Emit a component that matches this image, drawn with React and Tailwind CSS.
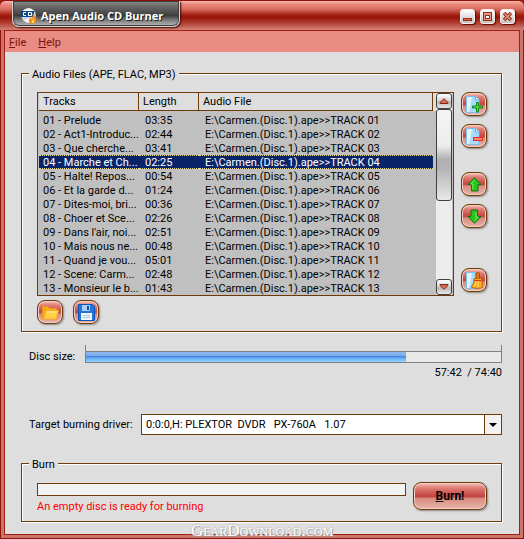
import { useState } from 'react';

const tracks = [
  { name: '01 - Prelude', length: '03:35' },
  { name: '02 - Act1-Introduc...', length: '02:44' },
  { name: '03 - Que cherche...', length: '03:41' },
  { name: '04 - Marche et Ch...', length: '02:25' },
  { name: '05 - Halte! Repos...', length: '00:54' },
  { name: '06 - Et la garde d...', length: '01:24' },
  { name: '07 - Dites-moi, bri...', length: '00:36' },
  { name: '08 - Choer et Sce...', length: '02:26' },
  { name: "09 - Dans l'air, noi...", length: '02:51' },
  { name: '10 - Mais nous ne...', length: '00:48' },
  { name: '11 - Quand je vou...', length: '05:01' },
  { name: '12 - Scene: Carm...', length: '02:48' },
  { name: '13 - Monsieur le b...', length: '01:43' },
];

const DRIVER = '0:0:0,H: PLEXTOR\u00a0 DVDR\u00a0\u00a0 PX-760A\u00a0\u00a0 1.07';

// glossy red surface shared by all push buttons
const GLOSS =
  'border border-[#6e3a08] bg-[linear-gradient(#f6c4bc_0%,#e08078_18%,#c84c48_46%,#c04844_52%,#d88c80_60%,#e8b4a8_100%)] shadow-[1px_1px_2px_#8a8a8a,inset_0_0_0_1px_#f2d0c8]';

function AppIcon() {
  return (
    <svg width="16" height="16" viewBox="0 0 16 16" aria-hidden="true" className="shrink-0">
      <circle cx="7.5" cy="7.5" r="7.3" fill="#cfd6dc" />
      <path d="M2 3a7 7 0 0 1 10-1L8 7z" fill="#fff" />
      <path d="M3 12a7 7 0 0 0 6 3l-1-5z" fill="#f4f6f8" />
      <rect y="3" width="13" height="6" fill="#0a4a88" />
      <path d="M5 4.500H2.500v3H5M7.500 4v4M7 4.500h3.500v3H7" fill="none" stroke="#fff" />
      <path d="M8.500 15.500c-1.500-3 .5-4 .5-6 1 .5 1.500 1.500 1.500 2.500C12 10 12 7 11.500 5 14 7 14 9 14 10.500l1-1.500c1 3 0 5.500-2 6.500z" fill="#f58a12" />
      <path d="M10.500 15c0-2 1.500-2 1.500-4.500 1.500 1.500 1.500 3.500.5 4.500z" fill="#ffe04a" />
    </svg>
  );
}

function Sheet() {
  return (
    <>
      <path d="M.5.5h9.500l3 3v13H.5z" fill="#a8dcfa" stroke="#7cc0ec" />
      <path d="M1 1h5L3 16H1z" fill="#e0f6ff" />
      <path d="M9.500 1v3h3" fill="#fff" stroke="#5ca8e0" />
    </>
  );
}

function AddIcon() {
  return (
    <svg width="17" height="17" viewBox="0 0 17 17" className="shrink-0">
      <Sheet />
      <path d="M10.500 6.500h2v3.500h4v2h-4v4h-2v-4h-4v-2h4z" fill="#5ed83c" stroke="#128414" />
    </svg>
  );
}

function RemoveIcon() {
  return (
    <svg width="17" height="17" viewBox="0 0 17 17" className="shrink-0">
      <Sheet />
      <rect x="7.500" y="9.500" width="9" height="3" fill="#ff8878" stroke="#e8281c" />
    </svg>
  );
}

function ArrowIcon({ down }) {
  return (
    <svg width="15" height="15" viewBox="0 0 15 15" className={down ? 'shrink-0 rotate-180' : 'shrink-0'}>
      <path d="M7.500 .7L14 7.500h-3v6.500H4.500V7.500H1z" fill="#2cc41c" stroke="#0c7410" />
      <path d="M7.500 3L4 7h2v5" fill="none" stroke="#7cea60" />
    </svg>
  );
}

function CleanIcon() {
  return (
    <svg width="17" height="17" viewBox="0 0 17 17" className="shrink-0">
      <Sheet />
      <path d="M10 2c0-2 3.500-2 3.500 0v4.500H10z" fill="#e87818" stroke="#a84808" />
      <path d="M8 6.500h7.500l1 9c-3 1.200-8 1.200-11.500-.5 2-2 3-4.500 3-8.500z" fill="#ffac24" stroke="#c06408" />
      <path d="M8 8.500h7.500" stroke="#d83c10" />
      <path d="M8.500 14.500l1.500-5M12 15.500v-6" stroke="#ffe068" />
    </svg>
  );
}

function FolderIcon() {
  return (
    <svg width="17" height="15" viewBox="0 0 17 15" className="shrink-0">
      <path d="M.5 13.500v-12H6L7.500 3.500h7v10z" fill="#f8a818" stroke="#e89820" />
      <path d="M1.500 14L4 5.500h12.500L14 14z" fill="#ffd040" stroke="#f8a828" />
      <path d="M5 7h10" stroke="#fff0a0" />
    </svg>
  );
}

function SaveIcon() {
  return (
    <svg width="17" height="17" viewBox="0 0 17 17" className="shrink-0">
      <path d="M.5.500h14l2 2v14H.5z" fill="#2474dc" stroke="#0c54b8" />
      <rect x="4" y="1" width="8" height="6" fill="#a8ccf4" />
      <rect x="9" y="2" width="2" height="4" fill="#0c50b0" />
      <rect x="3" y="9" width="11" height="7" fill="#f0f6fc" />
      <path d="M4.500 11.500h8M4.500 13.500h8" stroke="#b4c8dc" />
    </svg>
  );
}

function ToolButton({ label, className = '', children }) {
  return (
    <button
      type="button"
      aria-label={label}
      className={`flex h-6 w-[26px] shrink-0 items-center justify-center rounded-[8px] p-0 ${GLOSS} ${className}`}
    >
      {children}
    </button>
  );
}

function WindowButton({ label, children }) {
  return (
    <button
      type="button"
      aria-label={label}
      className="flex size-[15px] items-center justify-center rounded-[3px] border border-[#f6eeec] bg-[linear-gradient(#ffffff,#c8c0be)] shadow-[1px_1px_1px_#5c0c04]"
    >
      <svg width="11" height="11" viewBox="0 0 11 11" fill="none" stroke="#8c3018" className="shrink-0">
        {children}
      </svg>
    </button>
  );
}

function TitleBar() {
  return (
    <header className="flex h-[30px] items-start justify-between rounded-t-[6px] border-t border-[#8c140c] bg-[linear-gradient(#fbb8b0_0%,#ec8c80_10%,#d86c60_28%,#a42014_48%,#981408_56%,#b03c30_75%,#d48478_100%)] pl-3 pr-[9px]">
      <div className="flex h-[26px] items-center gap-1 rounded-b-[7px] border-x border-b border-[#d8d0d0] bg-[linear-gradient(#8c8c8c_0%,#6c6c6c_20%,#484848_50%,#3c3c3c_58%,#808080_78%,#b8b8b8_100%)] pl-2 pr-4 pt-1 shadow-[1px_1px_2px_#3c0804,inset_0_0_0_1px_#404040]">
        <AppIcon />
        <h1 className="whitespace-nowrap font-['Open_Sans','Noto_Sans',sans-serif] text-[11px] font-bold leading-4 text-white [text-shadow:1px_1px_0_#202020]">
          Apen Audio CD Burner
        </h1>
      </div>
      <div className="flex gap-[5px] pt-2">
        <WindowButton label="Minimize">
          <rect x="1.500" y="7.500" width="8" height="2" fill="#e86050" />
        </WindowButton>
        <WindowButton label="Maximize">
          <rect x="1.500" y="1.500" width="8" height="8" fill="#e89888" />
          <rect x="3.500" y="4.500" width="4" height="3" fill="#fff" />
        </WindowButton>
        <WindowButton label="Close">
          <path d="M2 2l7 7M9 2L2 9" strokeWidth="3.500" />
          <path d="M2.500 2.500l6 6M8.500 2.500l-6 6" stroke="#e89080" strokeWidth="1.500" />
        </WindowButton>
      </div>
    </header>
  );
}

function ScrollBar() {
  const box = 'flex h-4 shrink-0 items-center justify-center rounded-[3px] border border-[#404040] bg-[linear-gradient(#ffffff,#d8d8d8_45%,#b8b8b8_55%,#e8e8e8)]';
  return (
    <div className="flex w-4 shrink-0 flex-col bg-[#ececec]">
      <button type="button" aria-label="Scroll up" className={box}>
        <svg width="10" height="6" viewBox="0 0 10 6" className="shrink-0">
          <path d="M5 .7L9 4.500v1H1v-1z" fill="#e06850" stroke="#7c2c14" />
        </svg>
      </button>
      <div className="h-[92px] rounded-[3px] border border-[#404040] bg-[linear-gradient(#f4f4f4_0%,#ececec_40%,#b0b0b0_55%,#b4b4b4_65%,#e8e8e8_100%)]" />
      <div className="flex-1" />
      <button type="button" aria-label="Scroll down" className={box}>
        <svg width="10" height="6" viewBox="0 0 10 6" className="shrink-0">
          <path d="M5 5.300L9 1.500v-1H1v1z" fill="#e06850" stroke="#7c2c14" />
        </svg>
      </button>
    </div>
  );
}

function TrackList() {
  const [selected, setSelected] = useState(3);
  const th = 'h-[18px] border-b border-r border-[#6e3a08] p-0 pl-1 text-left font-normal leading-4';

  return (
    <div className="flex min-w-0 flex-1 border border-[#6e3a08] bg-[#c0c0c0] pl-px pr-px">
      <table className="min-w-0 flex-1 table-fixed border-separate border-spacing-0 whitespace-nowrap">
        <colgroup>
          <col className="w-[100px]" />
          <col className="w-[60px]" />
          <col />
        </colgroup>
        <thead className="bg-[#dedede]">
          <tr>
            <th className={th}>Tracks</th>
            <th className={th}>Length</th>
            <th className={th}>Audio File</th>
          </tr>
        </thead>
        <tbody>
          <tr aria-hidden="true">
            <td colSpan={3} className="h-0.5 p-0" />
          </tr>
          {tracks.map((t, i) => {
            const cell = `border-y border-dotted p-0 pt-px leading-[11px] ${
              i === selected ? 'border-[#f0e080] bg-[#0a246a] text-white' : 'border-transparent'
            }`;
            return (
              <tr key={t.name} onClick={() => setSelected(i)}>
                <td className={`${cell} pl-1`}>{t.name}</td>
                <td className={`${cell} pl-1.5`}>{t.length}</td>
                <td className={`${cell} pl-1.5`}>{`E:\\Carmen.(Disc.1).ape>>TRACK ${t.name.slice(0, 2)}`}</td>
              </tr>
            );
          })}
        </tbody>
      </table>
      <div className="w-[3px] bg-[linear-gradient(#dedede_18px,transparent_18px)]" />
      <ScrollBar />
    </div>
  );
}

function Group({ title, className = '', children }) {
  return (
    <fieldset className={`min-w-0 border border-[#6e3a08] pl-[15px] pr-3.5 shadow-[inset_1px_1px_0_#fff,1px_1px_0_#fff] ${className}`}>
      <legend className="-ml-2 bg-[#dedede] px-[3px] pt-1 leading-4">{title}</legend>
      {children}
    </fieldset>
  );
}

export default function App() {
  return (
    <div className="relative flex min-h-screen flex-col bg-[#a01c10] font-['Roboto','Liberation_Sans',sans-serif] text-[11px] text-black">
      <TitleBar />
      <div className="flex flex-1 flex-col border-x border-b border-[#8c140c]">
        <div className="flex flex-1 flex-col border-x-3 border-b-3 border-[#cc7468]">
          <div className="flex flex-1 flex-col border border-[#a02018] bg-[#dedede]">
            <nav className="flex h-[21px] items-center gap-3 bg-[#e88c84] px-1 pt-1 text-[#801008]">
              <a href="#file"><u>F</u>ile</a>
              <a href="#help"><u>H</u>elp</a>
            </nav>

            <main className="flex flex-col pl-4 pr-[17px] pt-[11px]">
              <Group title="Audio Files (APE, FLAC, MP3)" className="pb-[7px]">
                <div className="mt-[9px] flex gap-[7px]">
                  <TrackList />
                  <div className="flex flex-col">
                    <ToolButton label="Add files"><AddIcon /></ToolButton>
                    <ToolButton label="Remove file" className="mt-2"><RemoveIcon /></ToolButton>
                    <ToolButton label="Move up" className="mt-6"><ArrowIcon /></ToolButton>
                    <ToolButton label="Move down" className="mt-2"><ArrowIcon down /></ToolButton>
                    <ToolButton label="Clear list" className="mt-10"><CleanIcon /></ToolButton>
                  </div>
                </div>
                <div className="mt-1 flex gap-2.5">
                  <ToolButton label="Open project"><FolderIcon /></ToolButton>
                  <ToolButton label="Save project"><SaveIcon /></ToolButton>
                </div>
              </Group>

              <section className="mt-[13px] pl-2">
                <div className="flex items-end">
                  <span className="w-14 leading-3">Disc size:</span>
                  <div className="flex-1 border-x border-[#808080] pt-1.5">
                    <div className="h-3 border-y border-[#808080] bg-[#e8e8e8]">
                      <div className="h-full w-[77%] bg-[linear-gradient(#90b8ec_0%,#7cacec_35%,#4488e0_45%,#6cb0f4_65%,#94d4ff_100%)]" />
                    </div>
                  </div>
                </div>
                <p className="mt-0.5 text-right leading-4">57:42&nbsp; / 74:40</p>
              </section>

              <div className="mt-[33px] flex items-center pl-2">
                <label htmlFor="driver" className="w-28 leading-4">Target burning driver:</label>
                <div className="relative flex-1">
                  <select
                    id="driver"
                    className="block h-[21px] w-full appearance-none rounded-none border border-[#6e3a08] bg-white pl-1 pt-0.5 text-[11px]"
                  >
                    <option>{DRIVER}</option>
                  </select>
                  <span className="pointer-events-none absolute inset-y-px right-px flex w-[17px] items-center justify-center border-l border-[#6e3a08] bg-[#f2f2f2]">
                    <svg width="8" height="4" viewBox="0 0 8 4"><path d="M0 0h8L4 4z" /></svg>
                  </span>
                </div>
              </div>

              <Group title="Burn" className="mt-[18px] pb-1">
                <div className="mt-[9px] flex items-start gap-[7px]">
                  <div className="flex-1 pt-px">
                    <div className="h-[13px] border border-[#6e3a08] bg-[#f2f2f2]" />
                    <p className="mt-[3px] pb-0.5 leading-4 text-[#ff0000]">An empty disc is ready for burning</p>
                  </div>
                  <button type="button" className={`h-7 w-[74px] rounded-[8px] text-[12px] font-bold ${GLOSS}`}>
                    <u>B</u>urn!
                  </button>
                </div>
              </Group>
            </main>
          </div>
        </div>
      </div>
      <p className="pointer-events-none absolute bottom-0 left-1/2 -translate-x-1/2 whitespace-nowrap font-['Liberation_Serif',serif] text-[17px] leading-4 text-white [font-variant:small-caps] [text-shadow:1px_1px_1px_#999,-1px_0_0_#ccc,0_-1px_0_#ccc,1px_0_0_#ddd]">
        GearDownload.com
      </p>
    </div>
  );
}
